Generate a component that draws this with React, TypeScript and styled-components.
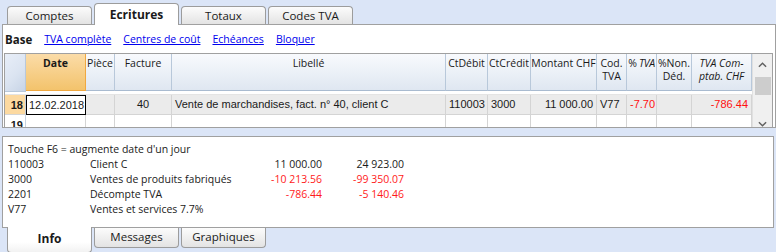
import React from 'react';
import styled, { createGlobalStyle, css } from 'styled-components';

const GlobalStyle = createGlobalStyle`
  body {
    margin: 0;
    background: #dbe5f7;
  }
`;

const uiFont = `"Open Sans", "Liberation Sans", sans-serif`;
const gridFont = `"Liberation Sans", Arial, sans-serif`;
const columns = '21px 60px 29px 57px 274px 42px 43px 66px 30px 30px 35px 60px';

const App: React.FC = () => {
  return (
    <Page>
      <GlobalStyle />
      <TopTabs>
        <TopTab>Comptes</TopTab>
        <TopTab $active>Ecritures</TopTab>
        <TopTab>Totaux</TopTab>
        <TopTab>Codes TVA</TopTab>
      </TopTabs>

      <MainPanel>
        <LinksBar>
          <Strong>Base</Strong>
          <Link>TVA complète</Link>
          <Link>Centres de coût</Link>
          <Link>Echéances</Link>
          <Link>Bloquer</Link>
        </LinksBar>

        <GridFrame>
          <Table>
            <Row>
              <CornerCell />
              <HeadCell $selected $bold>Date</HeadCell>
              <HeadCell>Pièce</HeadCell>
              <HeadCell>Facture</HeadCell>
              <HeadCell>Libellé</HeadCell>
              <HeadCell>CtDébit</HeadCell>
              <HeadCell>CtCrédit</HeadCell>
              <HeadCell>Montant CHF</HeadCell>
              <HeadCell>Cod.<br />TVA</HeadCell>
              <HeadCell $tight>% <i>TVA</i></HeadCell>
              <HeadCell>%Non.<br />Déd.</HeadCell>
              <HeadCell $italic>TVA Com-<br />ptab. CHF</HeadCell>
            </Row>
            <HeadGap />
            <Body>
              <Row>
                <NumCell $current>18</NumCell>
                <Cell $bg="#fff" $focus>12.02.2018</Cell>
                <Cell $bg="#ebebeb" />
                <Cell $bg="#ebebeb" $align="center">40</Cell>
                <Cell $bg="#ebebeb">Vente de marchandises, fact. n° 40, client C</Cell>
                <Cell $bg="#ebebeb">110003</Cell>
                <Cell $bg="#ebebeb">3000</Cell>
                <Cell $bg="#ebebeb" $align="right">11 000.00</Cell>
                <Cell $bg="#ebebeb">V77</Cell>
                <Cell $bg="#ebebeb" $align="right" $red>-7.70</Cell>
                <Cell $bg="#ebebeb" />
                <Cell $bg="#ebebeb" $align="right" $red>-786.44</Cell>
              </Row>
              <Row>
                <NumCell>19</NumCell>
                {Array.from({ length: 11 }).map((_, i) => (
                  <Cell key={i} $bg="#fff" />
                ))}
              </Row>
            </Body>
          </Table>
          <ScrollBar>
            <Arrow viewBox="0 0 10 6">
              <path d="M1 5 L5 1 L9 5" />
            </Arrow>
            <Thumb />
            <Spacer />
            <Arrow viewBox="0 0 10 6">
              <path d="M1 1 L5 5 L9 1" />
            </Arrow>
          </ScrollBar>
        </GridFrame>
      </MainPanel>

      <InfoPanel>
        <InfoLine>Touche F6 = augmente date d'un jour</InfoLine>
        <InfoRow>
          <span>110003</span>
          <span>Client C</span>
          <Amount>11 000.00</Amount>
          <Amount>24 923.00</Amount>
        </InfoRow>
        <InfoRow>
          <span>3000</span>
          <span>Ventes de produits fabriqués</span>
          <Amount $red>-10 213.56</Amount>
          <Amount $red>-99 350.07</Amount>
        </InfoRow>
        <InfoRow>
          <span>2201</span>
          <span>Décompte TVA</span>
          <Amount $red>-786.44</Amount>
          <Amount $red>-5 140.46</Amount>
        </InfoRow>
        <InfoRow>
          <span>V77</span>
          <span>Ventes et services 7.7%</span>
        </InfoRow>
      </InfoPanel>

      <BottomTabs>
        <BottomTab $active>Info</BottomTab>
        <BottomTab>Messages</BottomTab>
        <BottomTab>Graphiques</BottomTab>
      </BottomTabs>
    </Page>
  );
};

export default App;

const Page = styled.div`
  width: 776px;
  height: 252px;
  overflow: hidden;
  font-family: ${uiFont};
  color: #1a1a1a;
`;

const TopTabs = styled.div`
  display: flex;
  align-items: flex-end;
  gap: 2px;
  height: 24px;
  padding-left: 7px;
`;

const TopTab = styled.div<{ $active?: boolean }>`
  position: relative;
  width: 85px;
  height: 18px;
  box-sizing: border-box;
  border: 1px solid #9c9c9c;
  border-bottom: none;
  border-radius: 4px 4px 0 0;
  background: linear-gradient(#fcfcfc, #e3e3e3);
  font-size: 11.5px;
  line-height: 17px;
  text-align: center;
  ${(p) =>
    p.$active &&
    css`
      height: 22px;
      margin-bottom: -1px;
      z-index: 1;
      background: #fff;
      font-weight: 700;
      font-size: 12px;
      line-height: 21px;
    `}
`;

const MainPanel = styled.div`
  margin-left: 2px;
  width: 774px;
  height: 104px;
  box-sizing: border-box;
  border: 1px solid #a0a0a0;
  background: #fff;
`;

const LinksBar = styled.div`
  display: flex;
  align-items: center;
  gap: 12px;
  height: 28px;
  padding-left: 2px;
  font-size: 10.5px;
`;

const Strong = styled.span`
  font-weight: 700;
  font-size: 11.5px;
`;

const Link = styled.span`
  color: #0000ee;
  text-decoration: underline;
`;

const GridFrame = styled.div`
  display: flex;
  margin-left: 1px;
  width: 769px;
  height: 74px;
  box-sizing: border-box;
  border: 1px solid #a0a0a0;
  border-bottom: none;
`;

const Table = styled.div`
  display: flex;
  flex-direction: column;
  width: 747px;
`;

const Row = styled.div`
  display: grid;
  grid-template-columns: ${columns};
`;

const CornerCell = styled.div`
  height: 37px;
  border-right: 1px solid #b8c8da;
  border-bottom: 1px solid #b8c8da;
  background: linear-gradient(135deg, #e8eef8 0%, #dbe4f1 55%, #c7d4e6 100%);
`;

const HeadCell = styled.div<{ $selected?: boolean; $bold?: boolean; $italic?: boolean; $tight?: boolean }>`
  height: 37px;
  box-sizing: border-box;
  padding-top: 3px;
  border-right: 1px solid #b8c8da;
  border-bottom: 1px solid #a9bbd0;
  background: linear-gradient(#f8fafd, #dfe7f1);
  font-size: 10.5px;
  line-height: 13px;
  text-align: center;
  white-space: nowrap;
  overflow: hidden;
  font-weight: ${(p) => (p.$bold ? 700 : 400)};
  font-style: ${(p) => (p.$italic ? 'italic' : 'normal')};
  letter-spacing: ${(p) => (p.$tight ? '-0.4px' : '0')};
  ${(p) =>
    p.$selected &&
    css`
      background: linear-gradient(#fbdca8, #f3c36c);
      border-right-color: #f0a840;
      border-bottom-color: #f0a840;
    `}
`;

const HeadGap = styled.div`
  height: 2px;
  border-bottom: 1px solid #e4e4e4;
`;

const Body = styled.div`
  height: 34px;
  overflow: hidden;
`;

const NumCell = styled.div<{ $current?: boolean }>`
  height: 19px;
  border-right: 1px solid #c6d2e0;
  border-bottom: 1px solid #d4d4d4;
  background: ${(p) => (p.$current ? '#fcd9a0' : '#fff')};
  font-family: ${gridFont};
  font-weight: 700;
  font-size: 11px;
  line-height: 21px;
  text-align: right;
  padding-right: 2px;
`;

const Cell = styled.div<{ $bg: string; $align?: string; $red?: boolean; $focus?: boolean }>`
  height: 20px;
  box-sizing: border-box;
  padding: 0 3px;
  border-right: 1px solid #d4d4d4;
  border-bottom: 1px solid #d4d4d4;
  background: ${(p) => p.$bg};
  color: ${(p) => (p.$red ? '#ff1010' : '#1a1a1a')};
  font-family: ${gridFont};
  font-size: 11px;
  line-height: 19px;
  text-align: ${(p) => p.$align || 'left'};
  white-space: nowrap;
  overflow: hidden;
  ${(p) =>
    p.$focus &&
    css`
      border: 1px solid #000;
      padding: 0 2px;
      line-height: 18px;
    `}
`;

const ScrollBar = styled.div`
  display: flex;
  flex-direction: column;
  align-items: center;
  width: 21px;
  background: #f0f0f0;
  border-left: 1px solid #e0e0e0;
  padding-top: 8px;
  box-sizing: border-box;
`;

const Arrow = styled.svg`
  width: 9px;
  height: 6px;
  fill: none;
  stroke: #606060;
  stroke-width: 1.6;
`;

const Thumb = styled.div`
  width: 16px;
  height: 18px;
  margin-top: 9px;
  background: #cdcdcd;
`;

const Spacer = styled.div`
  flex: 1;
`;

const InfoPanel = styled.div`
  margin: 8px 0 0 2px;
  width: 772px;
  height: 92px;
  box-sizing: border-box;
  border: 1px solid #a0a0a0;
  background: #fff;
  padding: 5px 0 0 5px;
  font-size: 10.5px;
  line-height: 15px;
`;

const InfoLine = styled.div``;

const InfoRow = styled.div`
  display: grid;
  grid-template-columns: 82px 150px 82px 82px;
`;

const Amount = styled.span<{ $red?: boolean }>`
  text-align: right;
  color: ${(p) => (p.$red ? '#ff1a1a' : '#1a1a1a')};
`;

const BottomTabs = styled.div`
  display: flex;
  align-items: flex-start;
  gap: 2px;
  margin-top: -1px;
  padding-left: 7px;
`;

const BottomTab = styled.div<{ $active?: boolean }>`
  width: 85px;
  height: 20px;
  box-sizing: border-box;
  margin-top: 1px;
  border: 1px solid #9c9c9c;
  border-top: none;
  border-radius: 0 0 4px 4px;
  background: linear-gradient(#fcfcfc, #e3e3e3);
  font-size: 11.5px;
  line-height: 18px;
  text-align: center;
  ${(p) =>
    p.$active &&
    css`
      height: 26px;
      margin-top: 0;
      position: relative;
      z-index: 1;
      background: linear-gradient(#fff 60%, #f2f2f2);
      font-weight: 700;
      font-size: 12px;
      line-height: 24px;
    `}
`;
